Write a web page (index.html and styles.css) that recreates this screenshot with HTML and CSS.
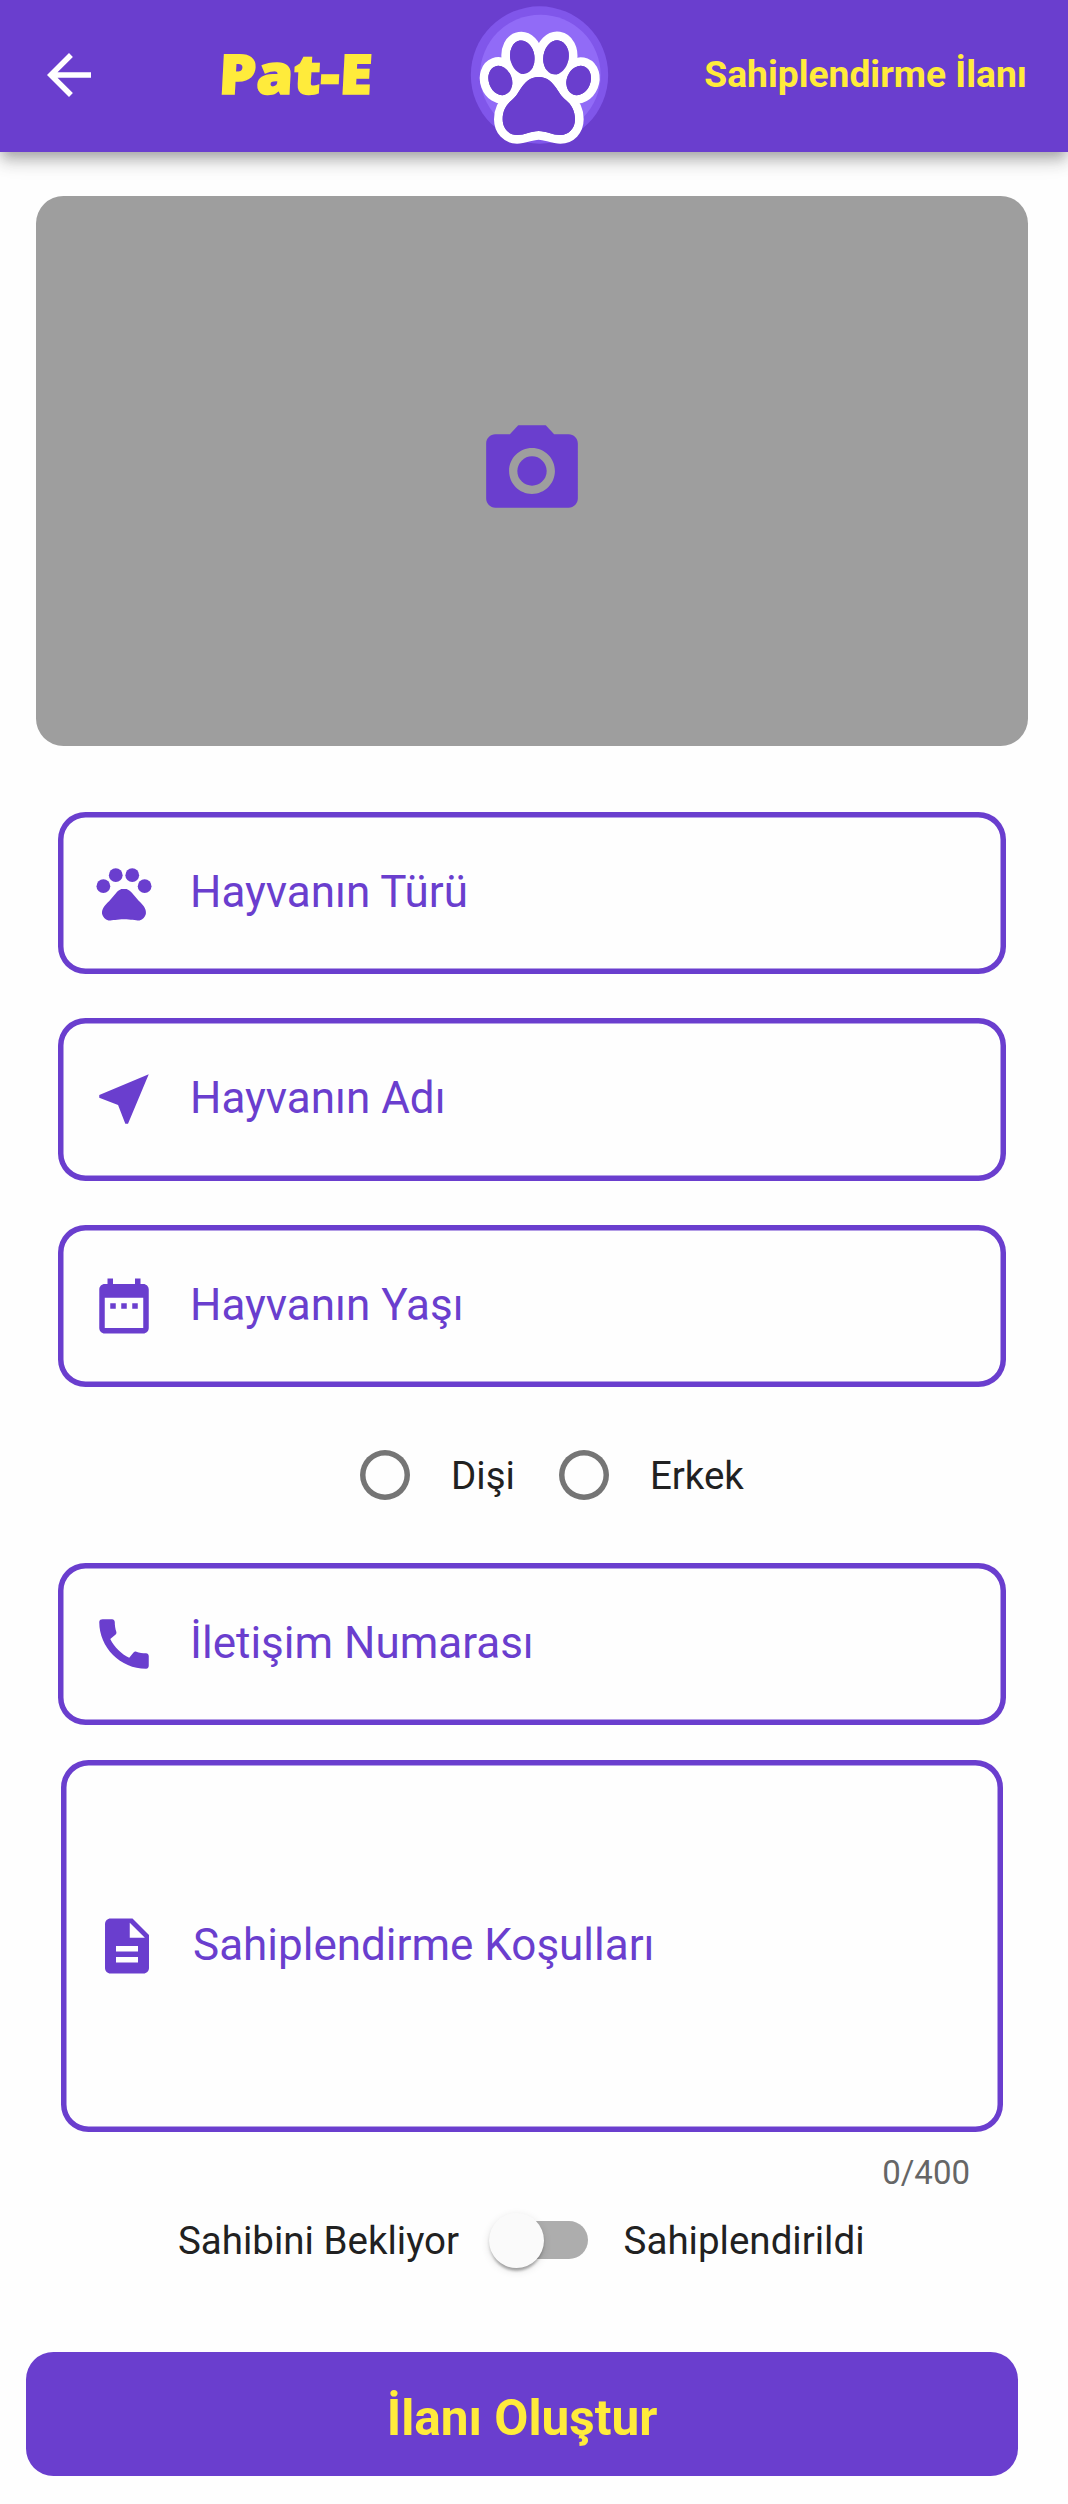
FILE: index.html
```html
<!DOCTYPE html>
<html lang="tr">
<head>
<meta charset="utf-8">
<title>Sahiplendirme İlanı</title>
<link rel="stylesheet" href="styles.css">
</head>
<body>
<header class="app-bar">
  <svg class="icon back" viewBox="0 0 24 24"><path d="M20 11H7.83l5.59-5.59L12 4l-8 8 8 8 1.41-1.41L7.83 13H20v-2z"/></svg>
  <div class="brand"><span class="brand-name">Pat-E</span></div>
  <svg class="logo" viewBox="90 15 420 420">
    <circle cx="298.500" cy="225" r="206" fill="#8056ea"/>
    <circle cx="301" cy="225" r="181" fill="#916bf7"/>
    <g fill="#6a3ece" stroke="#fff" stroke-width="52" stroke-linejoin="round" paint-order="stroke">
      <g id="paw">
        <ellipse cx="247" cy="171.500" rx="36.500" ry="50.500" transform="rotate(-9 247 171.500)"/>
        <ellipse cx="348" cy="172" rx="38" ry="51.500" transform="rotate(9 348 172)"/>
        <ellipse cx="181" cy="241.500" rx="34.500" ry="45" transform="rotate(-20 181 241.500)"/>
        <ellipse cx="416" cy="241.500" rx="35.500" ry="45" transform="rotate(22 416 241.500)"/>
        <path d="M296 231C270 231 254 248 243 265C232 282 227 291 215 301C199 314 188 333 188 358C188 386 207 405 231 405C255 405 272 393 296 393C320 393 337 405 361 405C386 405 405 386 405 358C405 333 394 314 378 301C366 291 360 282 349 265C338 248 322 231 296 231Z"/>
      </g>
    </g>
    <use href="#paw" fill="#6a3ece"/>
  </svg>
  <h1 class="title">Sahiplendirme İlanı</h1>
</header>
<main class="form">
  <div class="photo">
    <svg class="camera" viewBox="0 0 24 24"><circle cx="12" cy="12" r="3.200"/><path d="M9 2L7.170 4H4c-1.100 0-2 .9-2 2v12c0 1.100.9 2 2 2h16c1.100 0 2-.9 2-2V6c0-1.100-.9-2-2-2h-3.170L15 2H9zm3 15c-2.760 0-5-2.240-5-5s2.240-5 5-5 5 2.240 5 5-2.240 5-5 5z"/></svg>
  </div>
  <div class="fields">
    <div class="field">
      <svg class="icon" viewBox="0 0 24 24"><circle cx="4.500" cy="9.500" r="2.500"/><circle cx="9" cy="5.500" r="2.500"/><circle cx="15" cy="5.500" r="2.500"/><circle cx="19.500" cy="9.500" r="2.500"/><path d="M17.340 14.860c-.87-1.020-1.600-1.890-2.480-2.910-.46-.54-1.050-1.080-1.750-1.320-.11-.04-.22-.07-.33-.09-.25-.04-.52-.04-.78-.04s-.53 0-.79.050c-.11.020-.22.050-.33.090-.7.240-1.280.780-1.750 1.320-.87 1.020-1.600 1.890-2.480 2.910-1.310 1.310-2.920 2.760-2.620 4.790.29 1.020 1.020 2.030 2.330 2.320.73.150 3.060-.44 5.540-.44h.18c2.480 0 4.810.580 5.540.440 1.310-.29 2.040-1.310 2.330-2.320.31-2.040-1.300-3.490-2.610-4.800z"/></svg>
      <span>Hayvanın Türü</span>
    </div>
    <div class="field">
      <svg class="icon" viewBox="0 0 24 24"><path d="M21 3L3 10.530v.98l6.840 2.650L12.480 21h.98L21 3z"/></svg>
      <span>Hayvanın Adı</span>
    </div>
    <div class="field">
      <svg class="icon" viewBox="0 0 24 24"><path d="M9 11H7v2h2v-2zm4 0h-2v2h2v-2zm4 0h-2v2h2v-2zm2-7h-1V2h-2v2H8V2H6v2H5c-1.110 0-1.990.9-1.990 2L3 20c0 1.100.89 2 2 2h14c1.100 0 2-.9 2-2V6c0-1.100-.9-2-2-2zm0 16H5V9h14v11z"/></svg>
      <span>Hayvanın Yaşı</span>
    </div>
  </div>
  <div class="gender">
    <div class="option"><i class="radio"></i><span>Dişi</span></div>
    <div class="option"><i class="radio"></i><span>Erkek</span></div>
  </div>
  <div class="field phone">
    <svg class="icon" viewBox="0 0 24 24"><path d="M20.010 15.380c-1.230 0-2.420-.2-3.530-.56-.35-.12-.74-.03-1.010.240l-1.570 1.970c-2.830-1.350-5.480-3.900-6.890-6.830l1.950-1.660c.27-.28.35-.67.240-1.020-.37-1.110-.56-2.300-.56-3.530 0-.54-.45-.99-.99-.99H4.190C3.650 3 3 3.240 3 3.990 3 13.280 10.730 21 20.010 21c.71 0 .99-.63.990-1.180v-3.450c0-.54-.45-.99-.99-.99z"/></svg>
    <span>İletişim Numarası</span>
  </div>
  <div class="field terms">
    <svg class="icon" viewBox="0 0 24 24"><path d="M14 2H6c-1.100 0-1.990.9-1.990 2L4 20c0 1.100.89 2 1.990 2H18c1.100 0 2-.9 2-2V8l-6-6zm2 16H8v-2h8v2zm0-4H8v-2h8v2zm-3-5V3.500L18.500 9H13z"/></svg>
    <span>Sahiplendirme Koşulları</span>
  </div>
  <div class="counter">0/400</div>
  <div class="status">
    <span>Sahibini Bekliyor</span>
    <div class="switch"><i class="thumb"></i></div>
    <span>Sahiplendirildi</span>
  </div>
  <button class="submit">İlanı Oluştur</button>
</main>
</body>
</html>
```
FILE: styles.css
```css
* { box-sizing: border-box; }
body {
  margin: 0;
  min-height: 2504px;
  background: #fefefe;
  color: #212121;
  font-family: Roboto, sans-serif;
  font-size: 38.5px;
}
svg { display: block; flex: none; fill: currentColor; }
span { white-space: nowrap; }
.icon { width: 66px; height: 66px; }

.app-bar {
  display: grid;
  grid-template-columns: 66px 368px 140px 1fr;
  align-items: center;
  height: 152px;
  padding: 0 41px 2px 36px;
  background: #6a3ece;
  color: #ffeb3b;
  box-shadow: 0 5.5px 11px -2.750px rgba(0,0,0,.2), 0 11px 13.75px rgba(0,0,0,.14), 0 2.750px 27.5px rgba(0,0,0,.12);
}
.back { color: #fff; }
.brand { padding: 0 0 4px 115px; }
.brand-name {
  display: inline-block;
  font: 800 55px/76px "Open Sans", sans-serif;
  -webkit-text-stroke: 1.5px currentColor;
  transform: skewX(-3deg) scaleX(1.08);
  transform-origin: 0 100%;
}
.logo { width: 140px; height: 140px; }
.title { margin: 0; padding-bottom: 2px; text-align: right; font-size: 37.2px; line-height: 46px; font-weight: 700; white-space: nowrap; }

.form { display: flex; flex-direction: column; color: #6a3ece; }
.photo {
  display: grid;
  place-items: center;
  width: 992px;
  height: 550px;
  margin: 44px 0 66px 36px;
  border-radius: 27.5px;
  background: #9e9e9e;
}
.camera { width: 110px; height: 110px; }
.fields { display: flex; flex-direction: column; gap: 44px; }
.field {
  display: flex;
  align-items: center;
  gap: 33px;
  width: 948px;
  height: 162.25px;
  margin-left: 58px;
  padding-left: 33px;
  border-radius: 27.5px;
  box-shadow: inset 0 0 0 5.5px #6a3ece;
  font-size: 44px;
  line-height: 52px;
}
.field span { padding-bottom: 2px; }
.gender {
  display: flex;
  gap: 44px;
  height: 176px;
  padding: 1px 0 0 360px;
  color: #212121;
}
.option { display: flex; align-items: center; gap: 41px; }
.radio { width: 50px; height: 50px; border-radius: 50%; box-shadow: inset 0 0 0 5.5px #757575; }
.terms { width: 942px; height: 372px; margin: 35px 0 0 61px; }
.counter {
  margin: 21px 98px 0 0;
  text-align: right;
  color: #666;
  font-size: 33px;
  line-height: 39px;
}
.status { display: flex; align-items: center; height: 56px; margin: 20px 0 84px 178px; color: #212121; }
.switch {
  display: flex;
  align-items: center;
  width: 91px;
  height: 38.5px;
  margin: 0 35.5px 0 38px;
  border-radius: 20px;
  background: #adadad;
}
.thumb {
  flex: none;
  width: 55px;
  height: 55px;
  margin-left: -8px;
  border-radius: 50%;
  background: #fafafa;
  box-shadow: 0 5.5px 2.750px -2.750px rgba(0,0,0,.2), 0 2.750px 2.750px rgba(0,0,0,.14), 0 2.750px 8.250px rgba(0,0,0,.12);
}
.submit {
  width: 992px;
  height: 124px;
  margin-left: 26px;
  padding: 8px 0 0;
  border: 0;
  border-radius: 27.5px;
  background: #6a3ece;
  color: #ffeb3b;
  font: 700 49.5px/58px Roboto, sans-serif;
}
```
